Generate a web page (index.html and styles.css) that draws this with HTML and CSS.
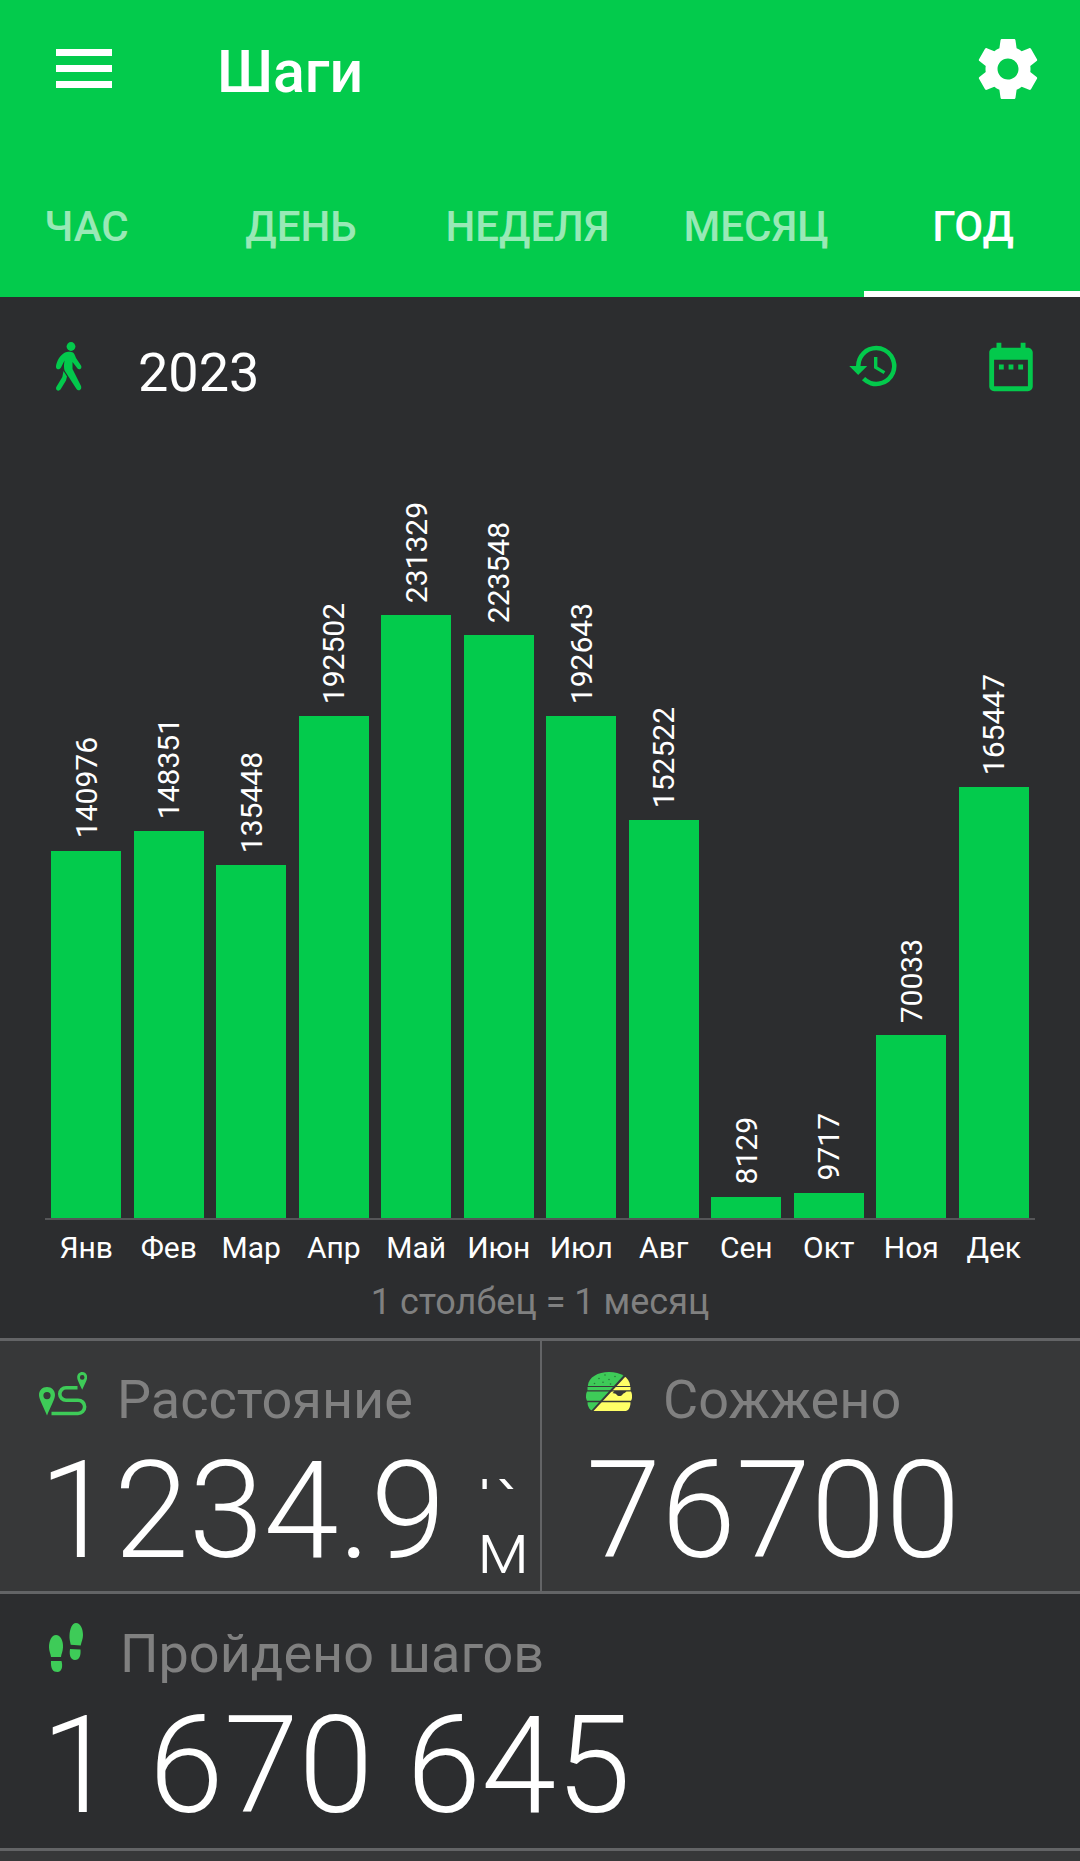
FILE: index.html
```html
<!DOCTYPE html>
<html lang="ru">
<head>
    <meta charset="UTF-8">
    <meta name="viewport" content="width=device-width, initial-scale=1.0">
    <title>Шаги</title>
    <link rel="stylesheet" href="styles.css">
</head>
<body>

    <header class="header">
        <div class="toolbar">
            <button class="menu-btn"><span></span><span></span><span></span></button>
            <h1>Шаги</h1>
            <button class="settings-btn">
                <svg viewBox="0 0 24 24"><path d="M19.43 12.98c.04-.32.07-.64.07-.98s-.03-.66-.07-.98l2.11-1.65c.19-.15.24-.42.12-.64l-2-3.46c-.12-.22-.39-.3-.61-.22l-2.49 1c-.52-.4-1.08-.73-1.69-.98l-.38-2.65C14.46 2.18 14.25 2 14 2h-4c-.25 0-.46.18-.49.42l-.38 2.65c-.61.25-1.17.59-1.69.98l-2.49-1c-.23-.09-.49 0-.61.22l-2 3.46c-.13.22-.07.49.12.64l2.11 1.65c-.04.32-.07.65-.07.98s.03.66.07.98l-2.11 1.65c-.19.15-.24.42-.12.64l2 3.46c.12.22.39.3.61.22l2.49-1c.52.4 1.08.73 1.69.98l.38 2.65c.03.24.24.42.49.42h4c.25 0 .46-.18.49-.42l.38-2.65c.61-.25 1.17-.59 1.69-.98l2.49 1c.23.09.49 0 .61-.22l2-3.46c.12-.22.07-.49-.12-.64l-2.11-1.65zM12 15.5c-1.93 0-3.5-1.57-3.5-3.5s1.57-3.5 3.5-3.5 3.5 1.57 3.5 3.5-1.57 3.5-3.5 3.5z"/></svg>
            </button>
        </div>
        <nav class="tabs">
            <a class="tab tab-hour">ЧАС</a>
            <a class="tab tab-day">ДЕНЬ</a>
            <a class="tab tab-week">НЕДЕЛЯ</a>
            <a class="tab">МЕСЯЦ</a>
            <a class="tab active">ГОД</a>
        </nav>
    </header>

    <section class="chart">
        <div class="chart-head">
            <svg class="icon-walk" viewBox="0 0 26 49">
                <circle cx="15" cy="4.5" r="4.4"/>
                <path d="M9 10.5c2-1 6-1.200 8 0 1.500 1 2 3 3 5.500l5 7.500c1.500 2.500-1.500 5-3.500 3l-5-6.500v7l8.500 17c1.300 3.500-2.500 6-4.500 3L9.500 30c-1.500-2-1.500-4-1.500-7l.5-4.500-3.500 7c-1.500 3-5.500 2-5-1.500 1-5 3.500-10.500 9-13.500z"/>
                <path d="M7.500 29l3.500 5.500-1 4-5.500 9c-2 2.500-5.500.5-4.200-2.500l6-10z"/>
            </svg>
            <span class="year">2023</span>
            <svg class="icon-history" viewBox="0 0 24 24"><path d="M13 3a9 9 0 0 0-9 9H1l3.890 3.890.07.14L9 12H6a7 7 0 1 1 2.060 4.940l-1.420 1.420A9 9 0 1 0 13 3zm-1 5v5l4.280 2.540.72-1.210-3.500-2.080V8z"/></svg>
            <svg class="icon-calendar" viewBox="0 0 24 24"><path d="M9 11H7v2h2v-2zm4 0h-2v2h2v-2zm4 0h-2v2h2v-2zm2-7h-1V2h-2v2H8V2H6v2H5c-1.110 0-2 .9-2 2v14c0 1.100.89 2 2 2h14c1.100 0 2-.9 2-2V6c0-1.100-.9-2-2-2zm0 16H5V9h14v11z"/></svg>
        </div>

        <div class="bars">
            <div class="col"><span class="value">140976</span><div class="bar" style="height: 367.5px"></div></div>
            <div class="col"><span class="value">148351</span><div class="bar" style="height: 386.7px"></div></div>
            <div class="col"><span class="value">135448</span><div class="bar" style="height: 353.1px"></div></div>
            <div class="col"><span class="value">192502</span><div class="bar" style="height: 501.8px"></div></div>
            <div class="col"><span class="value">231329</span><div class="bar" style="height: 603px"></div></div>
            <div class="col"><span class="value">223548</span><div class="bar" style="height: 582.7px"></div></div>
            <div class="col"><span class="value">192643</span><div class="bar" style="height: 502.2px"></div></div>
            <div class="col"><span class="value">152522</span><div class="bar" style="height: 397.6px"></div></div>
            <div class="col"><span class="value">8129</span><div class="bar" style="height: 21.2px"></div></div>
            <div class="col"><span class="value">9717</span><div class="bar" style="height: 25.3px"></div></div>
            <div class="col"><span class="value">70033</span><div class="bar" style="height: 182.6px"></div></div>
            <div class="col"><span class="value">165447</span><div class="bar" style="height: 431.3px"></div></div>
        </div>
        <div class="months">
            <span>Янв</span><span>Фев</span><span>Мар</span><span>Апр</span>
            <span>Май</span><span>Июн</span><span>Июл</span><span>Авг</span>
            <span>Сен</span><span>Окт</span><span>Ноя</span><span>Дек</span>
        </div>
        <p class="hint">1 столбец = 1 месяц</p>
    </section>

    <section class="stats">
        <div class="card card-distance">
            <div class="card-head">
                <svg class="icon-route" viewBox="0 0 48 44">
                    <path fill-rule="evenodd" d="M8 15c4.700 0 8 3.500 8 8 0 4-4.500 12-8 20.500C4.500 35 0 27 0 23c0-4.500 3.300-8 8-8zm0 5a3.600 3.600 0 1 0 0 7.200A3.600 3.600 0 0 0 8 20z"/>
                    <path fill-rule="evenodd" d="M43.200 0c3 0 5 2.300 5 5.200 0 3-2.600 7-5 12.500-2.400-5.500-5-9.500-5-12.500C38.200 2.300 40.200 0 43.200 0zm0 3.100a2.300 2.300 0 1 0 0 4.600 2.300 2.300 0 0 0 0-4.600z"/>
                    <path class="line" d="M38.500 15.800H27a5.700 5.700 0 0 0 0 12.400h12a6.500 6.500 0 0 1 0 13.300H12.500"/>
                </svg>
                <span>Расстояние</span>
            </div>
            <div class="card-value">1234.9<span class="unit">км</span></div>
        </div>
        <div class="card card-burned">
            <div class="card-head">
                <svg class="icon-burger" viewBox="0 0 46 39">
                    <defs>
                        <clipPath id="left"><path d="M0 0h37.500v3.500L5 39H0z"/></clipPath>
                        <clipPath id="right"><path d="M46 0v39H7.500L40 4z"/></clipPath>
                        <g id="burger">
                            <path d="M1.800 14C2.500 5 12 0 23 0s20.500 5 21.200 14z"/>
                            <path d="M1.500 15h43v3.200h-43z"/>
                            <path d="M1 19.500h44c1.500 3 1.500 7 0 9.300H1C-.4 26-.4 22.500 1 19.500z"/>
                            <path d="M1.500 30.200h43c0 5.300-2 8.800-6 8.800h-30c-4 0-7-3.500-7-8.800z"/>
                        </g>
                    </defs>
                    <use href="#burger" clip-path="url(#left)" fill="#3ecb58"/>
                    <use href="#burger" clip-path="url(#right)" fill="#ffff66"/>
                    <path fill="#373839" d="M28.500 19h12c-1 2-2.800 2-4 3.500-1.500 2-4.500 2-6 0-1-1.500-2.500-1-4-1.300z"/>
                    <g fill="#28783a">
                        <circle cx="13" cy="6.500" r=".8"/><circle cx="19" cy="3" r=".8"/><circle cx="23" cy="7.500" r=".8"/><circle cx="17" cy="10.300" r=".8"/>
                        <circle cx="29" cy="4.500" r=".8"/><circle cx="8.500" cy="11.500" r=".8"/><circle cx="24.500" cy="12" r=".8"/>
                    </g>
                </svg>
                <span>Сожжено</span>
            </div>
            <div class="card-value">76700</div>
        </div>
        <div class="card card-steps">
            <div class="card-head">
                <svg class="icon-feet" viewBox="0 0 34 49">
                    <path d="M7 12c4.500 0 7.500 6 7 12.500-.2 4-1.700 6.500-2 9.500H2C1.700 31 0 28 0 24.500 0 18 2.500 12 7 12zM2 38h10.500c1.500 5 .5 11-4 11C4 49 1.500 46 2 38z"/>
                    <path d="M27 0c4.500 0 7 6 7 12 0 4-1.500 6.500-2.300 10.500l-10-.7c-.5-3-1.500-6-1.200-9.500C20.800 6 23 0 27 0zM21 26l10.500.5c.5 6-1 10.500-5.500 10.500-4.500-.2-6-5-5-11z"/>
                </svg>
                <span>Пройдено шагов</span>
            </div>
            <div class="card-value">1 670 645</div>
        </div>
    </section>

</body>
</html>
```
FILE: styles.css
```css
* {
    box-sizing: border-box;
}
body {
    font-family: Roboto, sans-serif;
    background-color: #373839;
    color: white;
    margin: 0;
    padding: 0;
}
svg {
    display: block;
    flex: none;
    fill: #03c94c;
}
.header {
    height: 297px;
    background-color: #03cb4c;
}
.toolbar {
    display: flex;
    align-items: center;
    height: 138px;
    padding: 0 36px 0 56px;
}
.toolbar button {
    background: none;
    border: none;
    padding: 0;
}
.toolbar .menu-btn {
    display: flex;
    flex-direction: column;
    gap: 9.5px;
    width: 56px;
    margin-top: -1px;
}
.menu-btn span {
    height: 6.5px;
    background-color: white;
}
.toolbar h1 {
    flex: 1;
    margin: 4px 0 0 105px;
    font-size: 59px;
    font-weight: 500;
}
.settings-btn svg {
    width: 72px;
    height: 72px;
    fill: white;
}
.tabs {
    display: grid;
    grid-template-columns: repeat(5, 1fr);
    height: 159px;
}
.tab {
    padding-top: 64px;
    font-size: 42px;
    font-weight: 500;
    line-height: 49px;
    text-align: center;
    color: rgba(255, 255, 255, 0.6);
}
.tab-hour {
    padding-right: 43px;
}
.tab-day {
    padding-right: 46px;
}
.tab-week {
    padding-right: 25px;
}
.tab.active {
    padding-left: 2px;
    color: white;
    border-bottom: 6px solid white;
}
.chart {
    height: 1041px;
    padding: 0 45px;
    background-color: #2c2d2f;
}
.chart-head {
    display: flex;
    align-items: center;
    height: 138px;
    padding-left: 11px;
}
.icon-walk {
    width: 26px;
    height: 49px;
    margin-top: 1px;
}
.year {
    flex: 1;
    margin: 12px 0 0 56px;
    font-size: 54px;
}
.icon-history {
    width: 54px;
    height: 54px;
    margin-right: 81px;
}
.icon-calendar {
    width: 58px;
    height: 58px;
    margin: 1px -5px 0 0;
}
.bars {
    display: grid;
    grid-template-columns: repeat(12, 1fr);
    height: 785px;
    border-bottom: 2px solid #555658;
}
.col {
    display: flex;
    flex-direction: column;
    align-items: center;
    justify-content: flex-end;
}
.bar {
    width: 70px;
    background-color: #03cb4c;
}
.value {
    margin-bottom: 12px;
    padding-right: 1px;
    font-size: 30px;
    line-height: 36px;
    writing-mode: vertical-rl;
    transform: rotate(180deg);
}
.months {
    display: grid;
    grid-template-columns: repeat(12, 1fr);
    margin-top: 10px;
    font-size: 30px;
    line-height: 36px;
    text-align: center;
}
.hint {
    margin: 15px 0 0;
    font-size: 36px;
    line-height: 42px;
    text-align: center;
    color: #808080;
}
.stats {
    display: grid;
    grid-template-columns: 540px 540px;
    border-bottom: 3px solid #636466;
}
.card {
    height: 253px;
    padding: 31px 0 0 39px;
    border-top: 3px solid #636466;
}
.card-burned {
    padding-left: 44px;
    border-left: 2px solid #636466;
}
.card-steps {
    grid-column: 1 / 3;
    height: 257px;
    padding: 32px 0 0 49px;
    background-color: #2c2d2f;
}
.card-head {
    display: flex;
    height: 64px;
    font-size: 54px;
    line-height: 55px;
    color: #808080;
}
.icon-route {
    width: 48px;
    height: 44px;
    margin-right: 30px;
    fill: #3ecb58;
}
.icon-route .line {
    fill: none;
    stroke: #3ecb58;
    stroke-width: 3.6;
}
.icon-burger {
    width: 46px;
    height: 39px;
    margin-right: 31px;
}
.icon-feet {
    width: 34px;
    height: 49px;
    margin: -3px 37px 0 0;
    fill: #3ecb58;
}
.card-value {
    display: flex;
    font-size: 135px;
    font-weight: 300;
    line-height: 150px;
    white-space: pre;
}
.card-steps .card-value {
    margin: 1px 0 0 -8px;
}
/* the unit wraps by letter in a narrow box and only its last line fits */
.unit {
    display: flex;
    flex-direction: column;
    justify-content: flex-end;
    width: 50px;
    height: 112px;
    margin: 43px 0 0 31px;
    overflow: hidden;
    font-size: 72px;
    line-height: 84px;
    white-space: normal;
    word-break: break-all;
}
```
